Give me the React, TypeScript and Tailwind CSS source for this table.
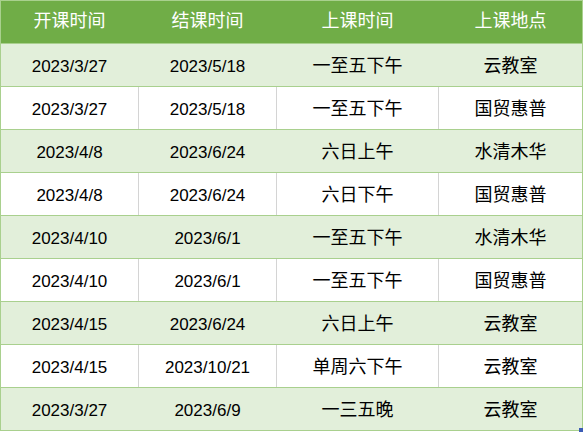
import React from "react";

const rows: [string, string, string, string][] = [
  ["2023/3/27", "2023/5/18", "一至五下午", "云教室"],
  ["2023/3/27", "2023/5/18", "一至五下午", "国贸惠普"],
  ["2023/4/8", "2023/6/24", "六日上午", "水清木华"],
  ["2023/4/8", "2023/6/24", "六日下午", "国贸惠普"],
  ["2023/4/10", "2023/6/1", "一至五下午", "水清木华"],
  ["2023/4/10", "2023/6/1", "一至五下午", "国贸惠普"],
  ["2023/4/15", "2023/6/24", "六日上午", "云教室"],
  ["2023/4/15", "2023/10/21", "单周六下午", "云教室"],
  ["2023/3/27", "2023/6/9", "一三五晚", "云教室"],
];

const widths = ["w-[138px]", "w-[138px]", "w-[162px]", "w-[144px]"];

export default function App() {
  return (
    <div
      className="relative w-[584px] h-[432px] bg-white text-[17px] text-black"
      style={{ fontFamily: '"Liberation Sans", "Noto Sans CJK SC", sans-serif' }}
    >
      <div className="w-[583px] border-l border-t border-[#a9d08e]">
        <div className="flex h-[43px] bg-[#70ad47] border-b border-[#a9d08e] text-white text-[18px]">
          {["开课时间", "结课时间", "上课时间", "上课地点"].map((h, i) => (
            <div
              key={h}
              className={`${widths[i]} flex items-center justify-center pb-[1px] border-r ${
                i === 3 ? "border-[#a9d08e]" : "border-[#70ad47]"
              }`}
            >
              {h}
            </div>
          ))}
        </div>
        {rows.map((r, ri) => {
          const green = ri % 2 === 0;
          return (
            <div
              key={ri}
              className={`flex h-[43px] border-b border-[#a9d08e] ${green ? "bg-[#e2efda]" : "bg-white"}`}
            >
              {r.map((c, ci) => (
                <div
                  key={ci}
                  className={`${widths[ci]} flex items-center justify-center pt-[3px] border-r ${
                    ci >= 2 ? "text-[18px]" : ""
                  } ${
                    ci === 3 ? "border-[#a9d08e]" : green ? "border-[#e2efda]" : "border-[#d4d4d4]"
                  }`}
                >
                  {c}
                </div>
              ))}
            </div>
          );
        })}
      </div>
      <div className="absolute left-[579px] top-[428px] w-[4px] h-[4px] bg-[#3b5bb5]" />
    </div>
  );
}
